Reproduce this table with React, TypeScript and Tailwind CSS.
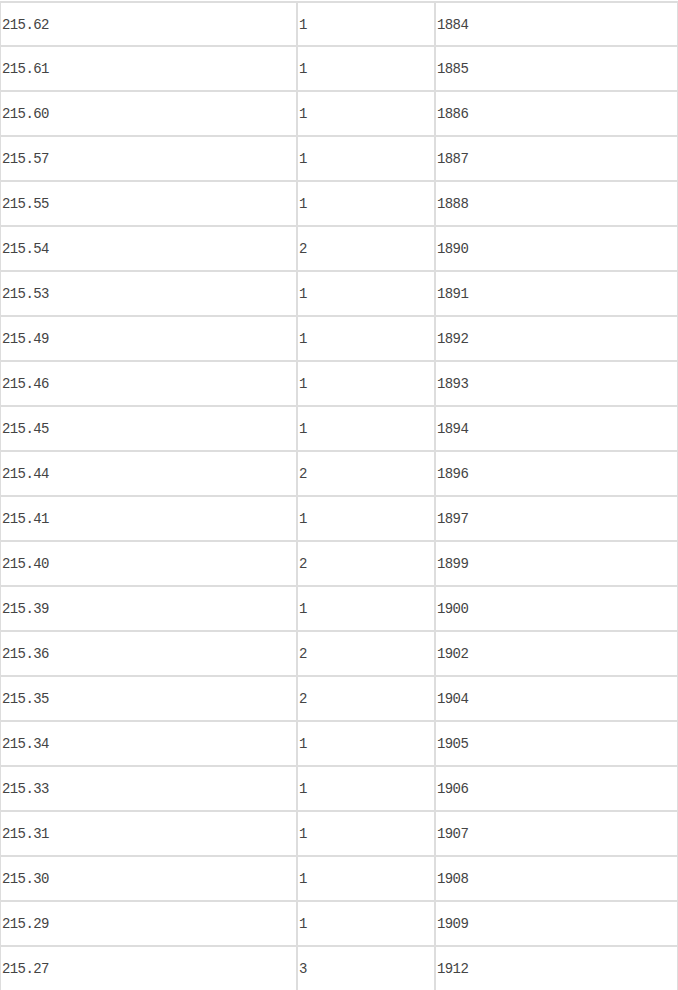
const rows: [string, string, string][] = [
  ["215.62", "1", "1884"],
  ["215.61", "1", "1885"],
  ["215.60", "1", "1886"],
  ["215.57", "1", "1887"],
  ["215.55", "1", "1888"],
  ["215.54", "2", "1890"],
  ["215.53", "1", "1891"],
  ["215.49", "1", "1892"],
  ["215.46", "1", "1893"],
  ["215.45", "1", "1894"],
  ["215.44", "2", "1896"],
  ["215.41", "1", "1897"],
  ["215.40", "2", "1899"],
  ["215.39", "1", "1900"],
  ["215.36", "2", "1902"],
  ["215.35", "2", "1904"],
  ["215.34", "1", "1905"],
  ["215.33", "1", "1906"],
  ["215.31", "1", "1907"],
  ["215.30", "1", "1908"],
  ["215.29", "1", "1909"],
  ["215.27", "3", "1912"],
];

const cell =
  "flex items-center border border-[#dddddd] pl-px pt-[2px] text-[14px] tracking-[-0.6px] text-[#444]";

export default function App() {
  return (
    <div
      className="mt-px w-[678px] overflow-hidden border-t border-[#dddddd] bg-white"
      style={{ fontFamily: '"Liberation Mono", "Noto Sans CJK SC", monospace' }}
    >
      {rows.map(([price, count, total], i) => (
        <div
          key={total}
          className={`grid grid-cols-[297px_138px_243px] ${i === 0 ? "h-[44px]" : "h-[45px]"}`}
        >
          <div className={cell}>{price}</div>
          <div className={cell}>{count}</div>
          <div className={cell}>{total}</div>
        </div>
      ))}
    </div>
  );
}
